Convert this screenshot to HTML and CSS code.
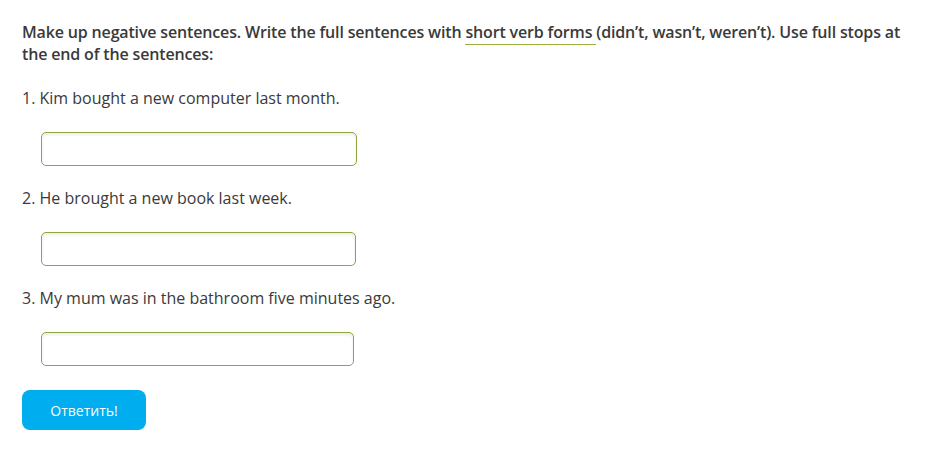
FILE: index.html
```html
<!DOCTYPE html>
<html>
<head>
<meta charset="utf-8">
<link rel="stylesheet" href="styles.css">
</head>
<body>
<div class="task">
  <p class="instr">Make up negative sentences. Write the full sentences with <span class="term">short verb forms </span>(didn’t, wasn’t, weren’t). Use full stops at the end of the sentences:</p>
  <div class="item">
    <p class="sent">1. Kim bought a new computer last month.</p>
    <input class="answer w1" type="text">
  </div>
  <div class="item">
    <p class="sent">2. He brought a new book last week.</p>
    <input class="answer w2" type="text">
  </div>
  <div class="item">
    <p class="sent">3. My mum was in the bathroom five minutes ago.</p>
    <input class="answer w3" type="text">
  </div>
  <button class="submit">Ответить!</button>
</div>
</body>
</html>
```
FILE: styles.css
```css
* { box-sizing: border-box; }
body {
  margin: 0;
  background: #fff;
  font-family: "Open Sans", "Liberation Sans", sans-serif;
  color: #333;
}
.task {
  padding: 21px 22px 0 22px;
  display: flex;
  flex-direction: column;
  align-items: flex-start;
}
.instr {
  margin: 0;
  font-size: 16px;
  font-weight: 600;
  line-height: 22px;
  letter-spacing: -0.16px;
  color: #3a3a3a;
}
.term {
  border-bottom: 1px solid #9bb03c;
  padding-bottom: 1px;
}
.item {
  display: flex;
  flex-direction: column;
  align-items: flex-start;
}
.sent {
  margin: 0;
  font-size: 16px;
  line-height: 22px;
  color: #3a3a3a;
}
.instr + .item .sent { margin-top: 22px; }
.item + .item .sent { margin-top: 21px; }
.answer {
  margin: 23px 0 0 19px;
  height: 34px;
  border: 1px solid #8ea63f;
  border-radius: 5px;
  box-shadow: inset 0 2px 3px rgba(0,0,0,0.08);
  background: #fff;
  font-family: inherit;
  font-size: 14px;
  padding: 0 8px;
  outline: none;
}
.w1 { width: 316px; }
.w2 { width: 315px; }
.w3 { width: 313px; }
.submit {
  margin-top: 24px;
  width: 124px;
  height: 40px;
  border: none;
  border-radius: 8px;
  background: #00adef;
  color: #fff;
  font-family: "Open Sans", "Liberation Sans", sans-serif;
  font-size: 14px;
  font-weight: 400;
  cursor: pointer;
}
```
